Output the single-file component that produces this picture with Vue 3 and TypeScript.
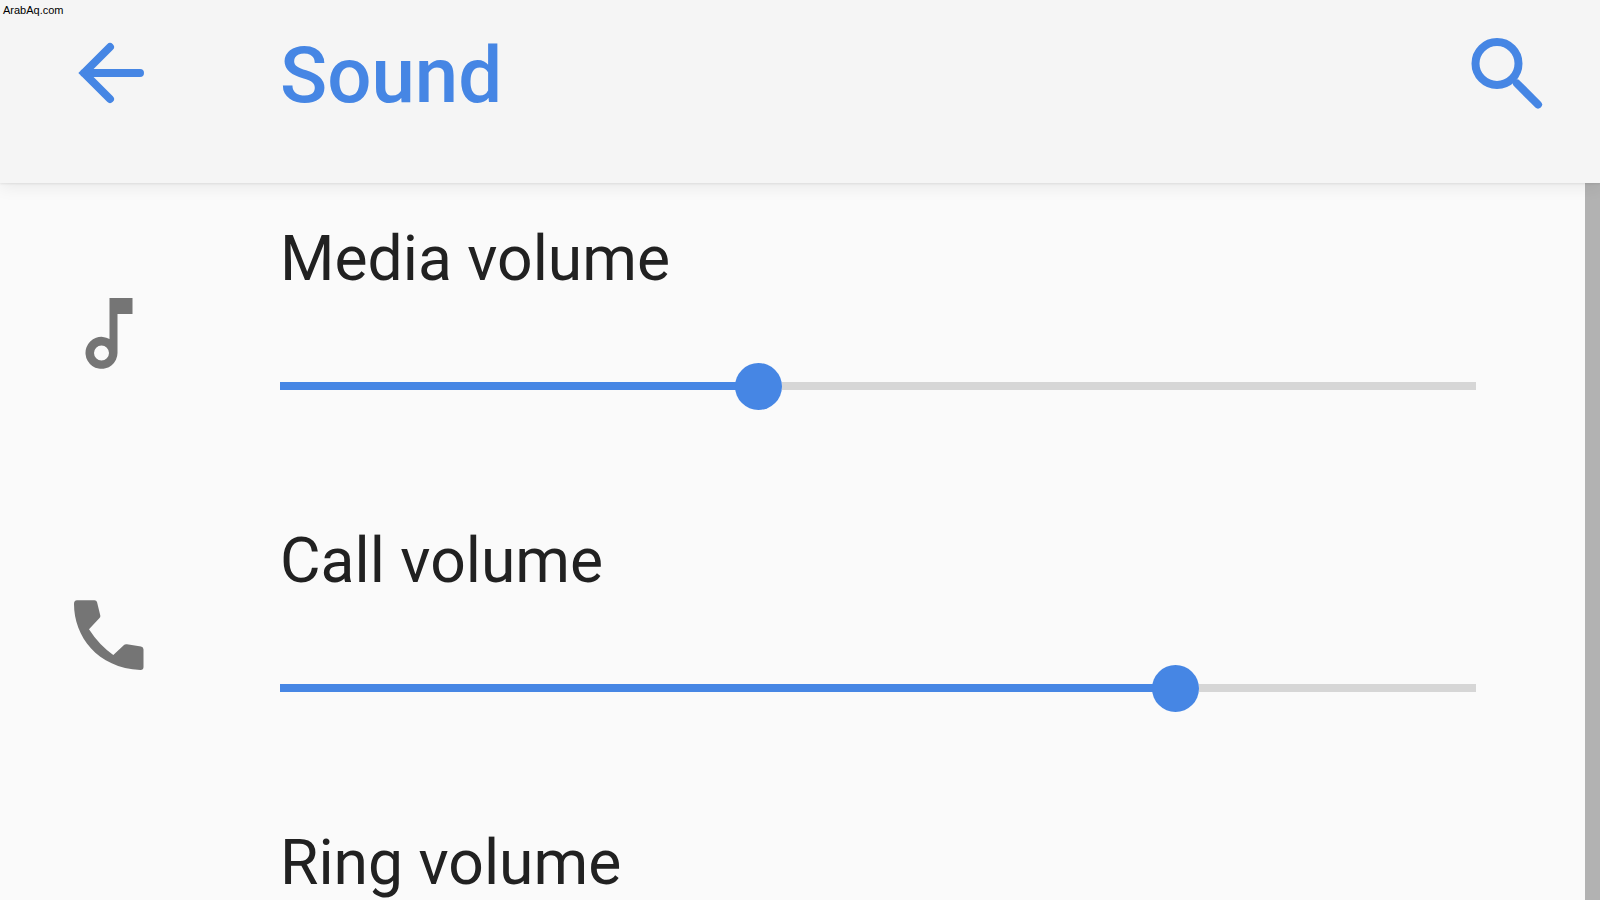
<script setup lang="ts">
interface Row { label: string; value: number; icon: 'music' | 'phone' | 'none' }
const rows: Row[] = [
  { label: 'Media volume', value: 38.1, icon: 'music' },
  { label: 'Call volume', value: 73, icon: 'phone' },
  { label: 'Ring volume', value: 60, icon: 'none' },
]
</script>

<template>
  <div class="page">
    <span class="mark">ArabAq.com</span>
    <header class="bar">
      <div class="nav">
        <svg class="back" width="76" height="64" viewBox="0 0 76 64">
          <path d="M12 32H68M38 6 12 32l26 26" fill="none" stroke="#4686e4" stroke-width="8" stroke-linecap="round" stroke-linejoin="miter" />
        </svg>
      </div>
      <h1 class="title">Sound</h1>
      <svg class="search" width="76" height="76" viewBox="0 0 76 76">
        <circle cx="30" cy="28.500" r="21.500" fill="none" stroke="#4686e4" stroke-width="8" />
        <path d="M50 48.500 71 69.500" stroke="#4686e4" stroke-width="8" stroke-linecap="round" />
      </svg>
    </header>
    <div class="body">
      <main class="list">
        <section v-for="row in rows" :key="row.label" class="row">
          <div class="icon">
            <svg v-if="row.icon === 'music'" width="60" height="80" viewBox="2.500 0 60 80">
              <path d="M33 8H56V24H41V63A16 16 0 1 1 33 49ZM25 55.500A7.500 7.500 0 1 0 25 70.500 7.500 7.500 0 0 0 25 55.500Z" fill="#757575" fill-rule="evenodd" />
            </svg>
            <svg v-else-if="row.icon === 'phone'" width="120" height="100" viewBox="-1 2 120 100">
              <path d="M24 24Q24 20.300 27 20.300H44.500Q46.500 20.300 47 22L50.300 35.500Q50.600 37 49.500 38L39 49.300Q49 65 63.300 75L74 65Q75 64 77 64.300L91 66.500Q93.500 67 93.500 69.500V87Q93.500 90 90.500 90C47 88 24 56 24 24Z" fill="#757575" />
            </svg>
          </div>
          <div class="content">
            <div class="label">{{ row.label }}</div>
            <div class="track">
              <div class="fill" :style="{ width: row.value + '%' }"></div>
              <div class="thumb"></div>
              <div class="rest"></div>
            </div>
          </div>
        </section>
      </main>
      <div class="scrollbar"></div>
    </div>
  </div>
</template>

<style scoped>
.page {
  position: relative;
  width: 1600px;
  height: 900px;
  overflow: hidden;
  display: flex;
  flex-direction: column;
  background: #fafafa;
  font-family: Roboto, "Liberation Sans", sans-serif;
}
.mark {
  position: absolute;
  left: 3px;
  top: 3px;
  font: 11px/14px "Liberation Sans", Arial, sans-serif;
  color: #000;
  z-index: 2;
}
.bar {
  position: relative;
  z-index: 1;
  flex: 0 0 183px;
  display: flex;
  align-items: flex-start;
  background: #f5f5f5;
  box-shadow: 0 1px 2px rgba(0, 0, 0, 0.08), 0 4px 16px rgba(0, 0, 0, 0.07);
}
.nav {
  flex: 0 0 280px;
  padding: 41px 0 0 72px;
  box-sizing: border-box;
}
.back, .search { display: block; }
.title {
  margin: 0;
  flex: 1;
  padding-top: 31px;
  font-size: 78px;
  line-height: 90px;
  font-weight: 500;
  color: #4686e4;
}
.search {
  margin: 35px 57px 0 0;
}
.body {
  flex: 1;
  display: flex;
  min-height: 0;
}
.list {
  flex: 1;
  min-width: 0;
  padding-top: 26px;
}
.row {
  height: 302px;
  display: flex;
}
.icon {
  flex: 0 0 218px;
  margin-right: 62px;
  height: 238px;
  padding-top: 4px;
  box-sizing: border-box;
  display: flex;
  align-items: center;
  justify-content: center;
}
.content {
  flex: 0 0 1196px;
  padding-top: 12px;
}
.label {
  font-size: 62.400px;
  line-height: 76px;
  color: #212121;
}
.track {
  display: flex;
  align-items: center;
  height: 48px;
  margin-top: 65px;
}
.fill {
  height: 8px;
  background: #4686e4;
  flex: none;
}
.thumb {
  flex: none;
  width: 47px;
  height: 47px;
  margin-left: -1px;
  border-radius: 50%;
  background: #4686e4;
}
.rest {
  flex: 1;
  height: 8px;
  background: #d6d6d6;
}
.scrollbar {
  flex: 0 0 15px;
  background: #b2b2b2;
}
</style>
